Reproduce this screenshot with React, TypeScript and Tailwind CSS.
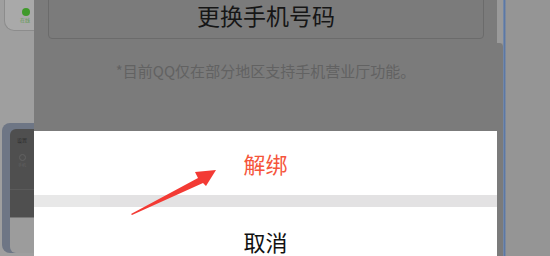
import React from "react";

const font = { fontFamily: '"Noto Sans CJK SC", "Noto Sans", sans-serif' };

function LeftRail() {
  return (
    <div className="flex w-[34px] shrink-0 flex-col bg-[#9f9f9f]">
      {/* contact card peeking in */}
      <div className="h-[31px] pl-[4px]">
        <div className="flex h-full flex-col items-end rounded-bl-[10px] border-b border-l border-[#8c8c8c] bg-[#a9a9a9] pr-[4px] pt-[8px]">
          <span className="h-[8px] w-[8px] rounded-full bg-[#3f9a2a]" />
          <span className="mt-[1px] text-[5px] leading-none text-[#5f9a52]">在线</span>
        </div>
      </div>
      <div className="h-[92px]" />
      {/* phone frame behind */}
      <div className="ml-[2px] flex h-[130px] flex-col rounded-l-[8px] bg-[#6e7685] pl-[8px] pt-[6px]">
        <div className="flex h-[88px] flex-col items-center rounded-tl-[6px] bg-[#4f4f4f] pt-[8px]">
          <span className="text-[5px] leading-none text-[#2e2e2e]">设置</span>
          <span className="mt-[12px] h-[7px] w-[7px] rounded-full border border-[#626262]" />
          <span className="mt-[2px] text-[4px] leading-none text-[#626262]">手机</span>
          <span className="mt-[22px] h-px w-full bg-[#5a5a5a]" />
        </div>
        <div className="h-px bg-[#777]" />
        <div className="flex-1 rounded-bl-[6px] bg-[#9c9c9c]" />
      </div>
    </div>
  );
}

function Sheet() {
  return (
    <div className="mt-auto flex flex-col bg-white">
      <div className="flex h-[64px] items-center justify-center">
        <span className="text-[22px] leading-none text-[#f5553b]">解绑</span>
      </div>
      <div className="flex h-[12px]">
        <div className="w-[66px] bg-[#e8e8e8]" />
        <div className="flex-1 bg-[#e3e2e3]" />
      </div>
      <div className="flex h-[49px] items-end justify-center pb-[4px]">
        <span className="text-[22px] leading-none text-[#111]">取消</span>
      </div>
    </div>
  );
}

export default function App() {
  return (
    <div className="relative flex h-[256px] w-[550px] overflow-hidden bg-[#959595]" style={font}>
      <LeftRail />

      {/* dimmed screen */}
      <div className="flex w-[463px] shrink-0 flex-col bg-[#7b7b7b]">
        <div className="pl-[14px] pr-[13px]">
          <div className="-mt-px flex h-[40px] items-center justify-center rounded-b-[4px] border border-[#6b6b6b] pb-[7px]">
            <span className="text-[23px] leading-none text-[#161616]">更换手机号码</span>
          </div>
        </div>
        <p className="mt-[24px] text-center text-[15px] leading-none text-[#626262]">
          *目前QQ仅在部分地区支持手机营业厅功能。
        </p>
        <Sheet />
      </div>

      {/* right edge of the dialog panel */}
      <div className="flex w-[6px] shrink-0 flex-col">
        <div className="h-[43px] bg-[#9a9a9a]" />
        <div className="flex-1 rounded-tr-[4px] bg-[#7b7b7b]" />
      </div>
      <div className="w-[3px] shrink-0 bg-gradient-to-r from-[#7f8ea6] via-[#5b78a6] to-[#8a909a]" />
      <div className="flex-1 bg-[#959595]" />

      {/* red annotation arrow */}
      <svg className="absolute left-0 top-0" width="550" height="256" viewBox="0 0 550 256">
        <polygon points="131,214 198,178 195,172 216,170 206,186 203,183 132,215" fill="#f33a34" />
      </svg>
    </div>
  );
}
